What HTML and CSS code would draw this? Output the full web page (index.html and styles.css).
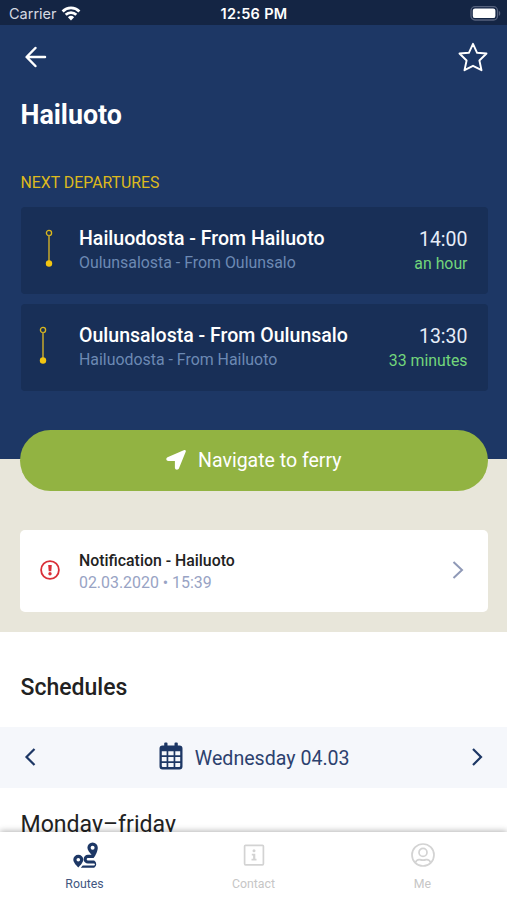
FILE: index.html
```html
<!DOCTYPE html>
<html lang="en">
<head>
<meta charset="utf-8">
<title>Hailuoto</title>
<link rel="stylesheet" href="styles.css">
</head>
<body>
<div class="app">
  <div class="status">
    <div class="status-left">
      <span class="carrier">Carrier</span>
      <svg class="wifi" width="20" height="15" viewBox="0 0 20 15"><g fill="none" stroke="#fff" stroke-width="2.800"><path d="M1.600 5.400a12 12 0 0 1 16.800 0"/><path d="M4.700 8.800a7.600 7.600 0 0 1 10.600 0"/></g><path d="M6.900 11.200a4.500 4.500 0 0 1 6.200 0L10 14.400z" fill="#fff"/></svg>
    </div>
    <span class="clock">12:56 PM</span>
    <div class="status-right">
      <svg width="31" height="15" viewBox="0 0 31 15"><rect x="1" y=".7" width="26.500" height="13.300" rx="4" fill="none" stroke="#56627d" stroke-width="1.300"/><rect x="2.800" y="2.600" width="22.600" height="9.500" rx="2.200" fill="#fff"/><path d="M28.900 5v4.800c1.800-.5 1.800-4.300 0-4.800z" fill="#56627d"/></svg>
    </div>
  </div>

  <header class="hero">
    <div class="topbar">
      <svg width="22" height="22" viewBox="0 0 22 22" fill="none" stroke="#fff" stroke-width="2.500" stroke-linecap="round" stroke-linejoin="round"><path d="M10.400 2L1.600 11l8.800 9M2 11h18"/></svg>
      <svg width="30" height="30" viewBox="0 0 30 30" fill="none" stroke="#fff" stroke-width="1.900" stroke-linejoin="round"><path d="M15 1.800l4.100 9 9.400.7-7.100 7 2.100 9.700-8.500-4.400-8.500 4.400 2.100-9.700-7.100-7 9.400-.7z"/></svg>
    </div>
    <h1 class="title">Hailuoto</h1>
    <h2 class="eyebrow">NEXT DEPARTURES</h2>
    <div class="departures">
      <div class="departure">
        <div class="rail"><svg width="8" height="38" viewBox="0 0 8 38"><circle cx="4" cy="4" r="2.600" fill="none" stroke="#d9b71d" stroke-width="1.300"/><path d="M4 6.600V33" stroke="#a99533" stroke-width="1.800"/><circle cx="4" cy="34.500" r="3.200" fill="#f2c511"/></svg></div>
        <div class="route"><div class="from">Hailuodosta - From Hailuoto</div><div class="to">Oulunsalosta - From Oulunsalo</div></div>
        <div class="when"><div class="time">14:00</div><div class="left">an hour</div></div>
      </div>
      <div class="departure">
        <div class="rail rail-near"><svg width="8" height="38" viewBox="0 0 8 38"><circle cx="4" cy="4" r="2.600" fill="none" stroke="#d9b71d" stroke-width="1.300"/><path d="M4 6.600V33" stroke="#a99533" stroke-width="1.800"/><circle cx="4" cy="34.500" r="3.200" fill="#f2c511"/></svg></div>
        <div class="route"><div class="from">Oulunsalosta - From Oulunsalo</div><div class="to">Hailuodosta - From Hailuoto</div></div>
        <div class="when"><div class="time">13:30</div><div class="left">33 minutes</div></div>
      </div>
    </div>
  </header>

  <section class="alerts">
    <button class="navigate">
      <svg width="22" height="22" viewBox="0 0 22 22"><path d="M19.300 1.100c1-.4 1.900.5 1.500 1.500l-6.900 16.900c-.8 1.800-4 1.500-4-.8V12H3.300c-2.200 0-2.700-2.900-.8-3.700z" fill="#fff"/></svg>
      <span>Navigate to ferry</span>
    </button>
    <div class="notice">
      <svg class="warn" width="20" height="20" viewBox="0 0 20 20"><circle cx="10" cy="10" r="8.900" fill="none" stroke="#d92f38" stroke-width="1.800"/><path d="M8.200 4.900h3.600l-.5 6.300H8.700z" fill="#d92f38"/><circle cx="10" cy="13.700" r="1.700" fill="#d92f38"/></svg>
      <div class="notice-text"><div class="notice-title">Notification - Hailuoto</div><div class="notice-date">02.03.2020 • 15:39</div></div>
      <svg class="more" width="12" height="18" viewBox="0 0 12 18" fill="none" stroke="#8f99b7" stroke-width="2"><path d="M1.500 1l8.500 8-8.500 8"/></svg>
    </div>
  </section>

  <main class="schedules">
    <h2 class="section-title">Schedules</h2>
    <div class="datebar">
      <svg width="12" height="18" viewBox="0 0 12 18" fill="none" stroke="#1d3765" stroke-width="2.200"><path d="M10.500 1L2.500 9l8 8"/></svg>
      <div class="date">
        <svg width="24" height="28" viewBox="0 0 24 28"><path d="M5.200 1.500a1 1 0 0 1 1-1h1.300a1 1 0 0 1 1 1V3.500h7V1.500a1 1 0 0 1 1-1h1.300a1 1 0 0 1 1 1V3.500h1.700a3 3 0 0 1 3 3v18a3 3 0 0 1-3 3H3.500a3 3 0 0 1-3-3v-18a3 3 0 0 1 3-3h1.700z" fill="#1d3765"/><g fill="#f5f7fb"><path d="M2.800 9.300h4.800v3.900H2.800zM9.300 9.300h5.300v3.900H9.300zM16.300 9.300h4.900v3.900h-4.900zM2.800 14.900h4.800v4.300H2.800zM9.300 14.900h5.300v4.300H9.300zM16.300 14.900h4.900v4.300h-4.900zM2.800 20.900h4.800v4.100H3.800a1 1 0 0 1-1-1zM9.300 20.900h5.300v4.100H9.300zM16.300 20.900h4.900V24a1 1 0 0 1-1 1h-3.900z"/></g></svg>
        <span>Wednesday 04.03</span>
      </div>
      <svg width="12" height="18" viewBox="0 0 12 18" fill="none" stroke="#1d3765" stroke-width="2.200"><path d="M2 1l8 8-8 8"/></svg>
    </div>
    <h3 class="days">Monday–friday</h3>
  </main>

  <nav class="tabs">
    <div class="tab active">
      <svg width="26" height="26" viewBox="0 0 26 26"><path d="M19.600.5a5.200 5.200 0 0 0-5.200 5.200c0 2.200 2.500 5.200 4.200 7.100H15a4.400 4.400 0 0 0 0 8.800h6a.9.900 0 0 1 0 1.800H9.700l-1.900 2.400H21.200a4.200 4.200 0 0 0 0-7.200H15a1.300 1.300 0 0 1 0-2.600h5.600c2-2.200 4.200-7.300 4.200-10.300A5.200 5.200 0 0 0 19.600.5zm0 3.200a2 2 0 1 1 0 4 2 2 0 0 1 0-4z" fill="#1d3765" fill-rule="evenodd"/><path d="M5.300 12.800A5 5 0 0 0 .3 17.800c0 2.600 3.200 5.900 5 7.600 1.800-1.700 5-5 5-7.600a5 5 0 0 0-5-5zm0 3.200a1.800 1.800 0 1 1 0 3.600 1.800 1.800 0 0 1 0-3.600z" fill="#1d3765" fill-rule="evenodd"/></svg>
      <span>Routes</span>
    </div>
    <div class="tab">
      <svg width="26" height="26" viewBox="0 0 26 26"><rect x="3.600" y="3.300" width="18.800" height="19.500" rx="1" fill="none" stroke="#d3d3d3" stroke-width="1.700"/><circle cx="13" cy="8.800" r="1.500" fill="#d3d3d3"/><path d="M10.800 11.800h3.500v5h1.200v1.700h-5v-1.700h1.600v-3.300h-1.300z" fill="#d3d3d3"/></svg>
      <span>Contact</span>
    </div>
    <div class="tab">
      <svg width="26" height="26" viewBox="0 0 26 26" fill="none" stroke="#d3d3d3" stroke-width="1.700"><circle cx="13" cy="13" r="11"/><circle cx="13" cy="10.400" r="4"/><path d="M5.500 20.500c.8-2.300 2.400-3.200 4.300-2.900 2.200.7 4.200.7 6.400 0 1.900-.3 3.500.6 4.300 2.900"/></svg>
      <span>Me</span>
    </div>
  </nav>
</div>
</body>
</html>
```
FILE: styles.css
```css
* { box-sizing: border-box; }
body { margin: 0; font-family: Roboto, sans-serif; color: #222; }
h1, h2, h3 { margin: 0; }
svg { display: block; flex: none; }
.app { width: 507px; height: 900px; overflow: hidden; display: flex; flex-direction: column; background: #fff; }

.status { height: 25px; flex: none; display: grid; grid-template-columns: 1fr auto 1fr; align-items: center; padding: 2px 6px 0 9px; background: #142544; color: #fff; font-family: Inter, sans-serif; font-size: 14.5px; }
.status-left { display: flex; align-items: center; gap: 4px; }
.carrier { color: #d5d9e2; }
.clock { font-weight: 600; letter-spacing: 0.3px; margin-right: 2px; }
.status-right { display: flex; justify-content: flex-end; }

.hero { height: 434px; flex: none; padding: 0 19.5px 0 20.5px; background: #1d3765; color: #fff; }
.topbar { height: 64px; display: flex; align-items: center; justify-content: space-between; padding-left: 4.5px; }
.topbar svg:last-child { margin-right: -0.5px; }
.title { margin-top: 8px; font-size: 26.8px; line-height: 36px; font-weight: 700; }
.eyebrow { margin-top: 40px; font-size: 15.85px; line-height: 20px; font-weight: 400; color: #ddb91d; }
.departures { margin-top: 14px; display: flex; flex-direction: column; gap: 10px; }
.departure { height: 87px; display: flex; padding: 19px 20px 0 24.5px; background: #182f57; border-radius: 4px; }
.rail { width: 34px; padding-top: 3px; }
.rail-near { margin-left: -6px; width: 40px; }
.route { flex: 1; }
.from { font-size: 19.55px; line-height: 26px; font-weight: 500; }
.to { font-size: 15.9px; line-height: 22px; color: #6c89b3; }
.when { text-align: right; padding-top: 1px; }
.time { font-size: 19.5px; line-height: 26px; color: #e6edf9; }
.left { font-size: 15.85px; line-height: 22px; color: #72d67b; }

.alerts { height: 173px; flex: none; padding: 0 20px; background: #e8e6da; }
.navigate { width: 467.5px; height: 61px; margin: -29.5px 0 0; padding: 1px 1px 0 0; border: 0; border-radius: 31px; background: #92b342; color: #fff; font: 400 19.5px/24px Roboto, sans-serif; display: flex; align-items: center; justify-content: center; gap: 11px; }
.navigate svg { margin-bottom: 2px; }
.navigate span { padding-top: 1px; }
.notice { margin-top: 39px; height: 82.5px; width: 467.5px; display: flex; align-items: center; padding: 0 24px 0 20px; background: #fff; border-radius: 5px; }
.warn, .more { margin-bottom: 2px; }
.notice-text { flex: 1; margin-left: 19px; padding-top: 3px; }
.notice-title { font-size: 15.85px; line-height: 22px; font-weight: 500; }
.notice-date { font-size: 15.9px; line-height: 22px; color: #98a3c4; }

.schedules { flex: 1; min-height: 0; overflow: hidden; }
.section-title { margin: 40px 0 0 20.5px; font-size: 23px; line-height: 32px; font-weight: 500; }
.datebar { margin-top: 23px; height: 61px; padding: 0 23.5px; display: flex; align-items: center; justify-content: space-between; background: #f5f7fb; color: #2c416e; font-size: 19.6px; }
.datebar > svg { margin-bottom: 1px; }
.datebar .date svg { margin-bottom: 3px; }
.date { display: flex; align-items: center; gap: 11.5px; margin-left: 2px; }
.date span { padding-top: 1px; }
.days { margin: 21px 0 0 20.5px; font-size: 23.1px; line-height: 32px; font-weight: 400; }

.tabs { position: relative; height: 68px; flex: none; display: grid; grid-template-columns: repeat(3, 1fr); background: #fff; box-shadow: 0 -1px 6px rgba(0, 0, 0, 0.3); }
.tab { display: flex; flex-direction: column; align-items: center; padding-top: 10px; font-size: 12.3px; line-height: 16px; color: #c6c6c6; }
.tab span { margin-top: 8px; }
.active { color: #42567f; }
.active svg { margin-left: 2px; }
```
